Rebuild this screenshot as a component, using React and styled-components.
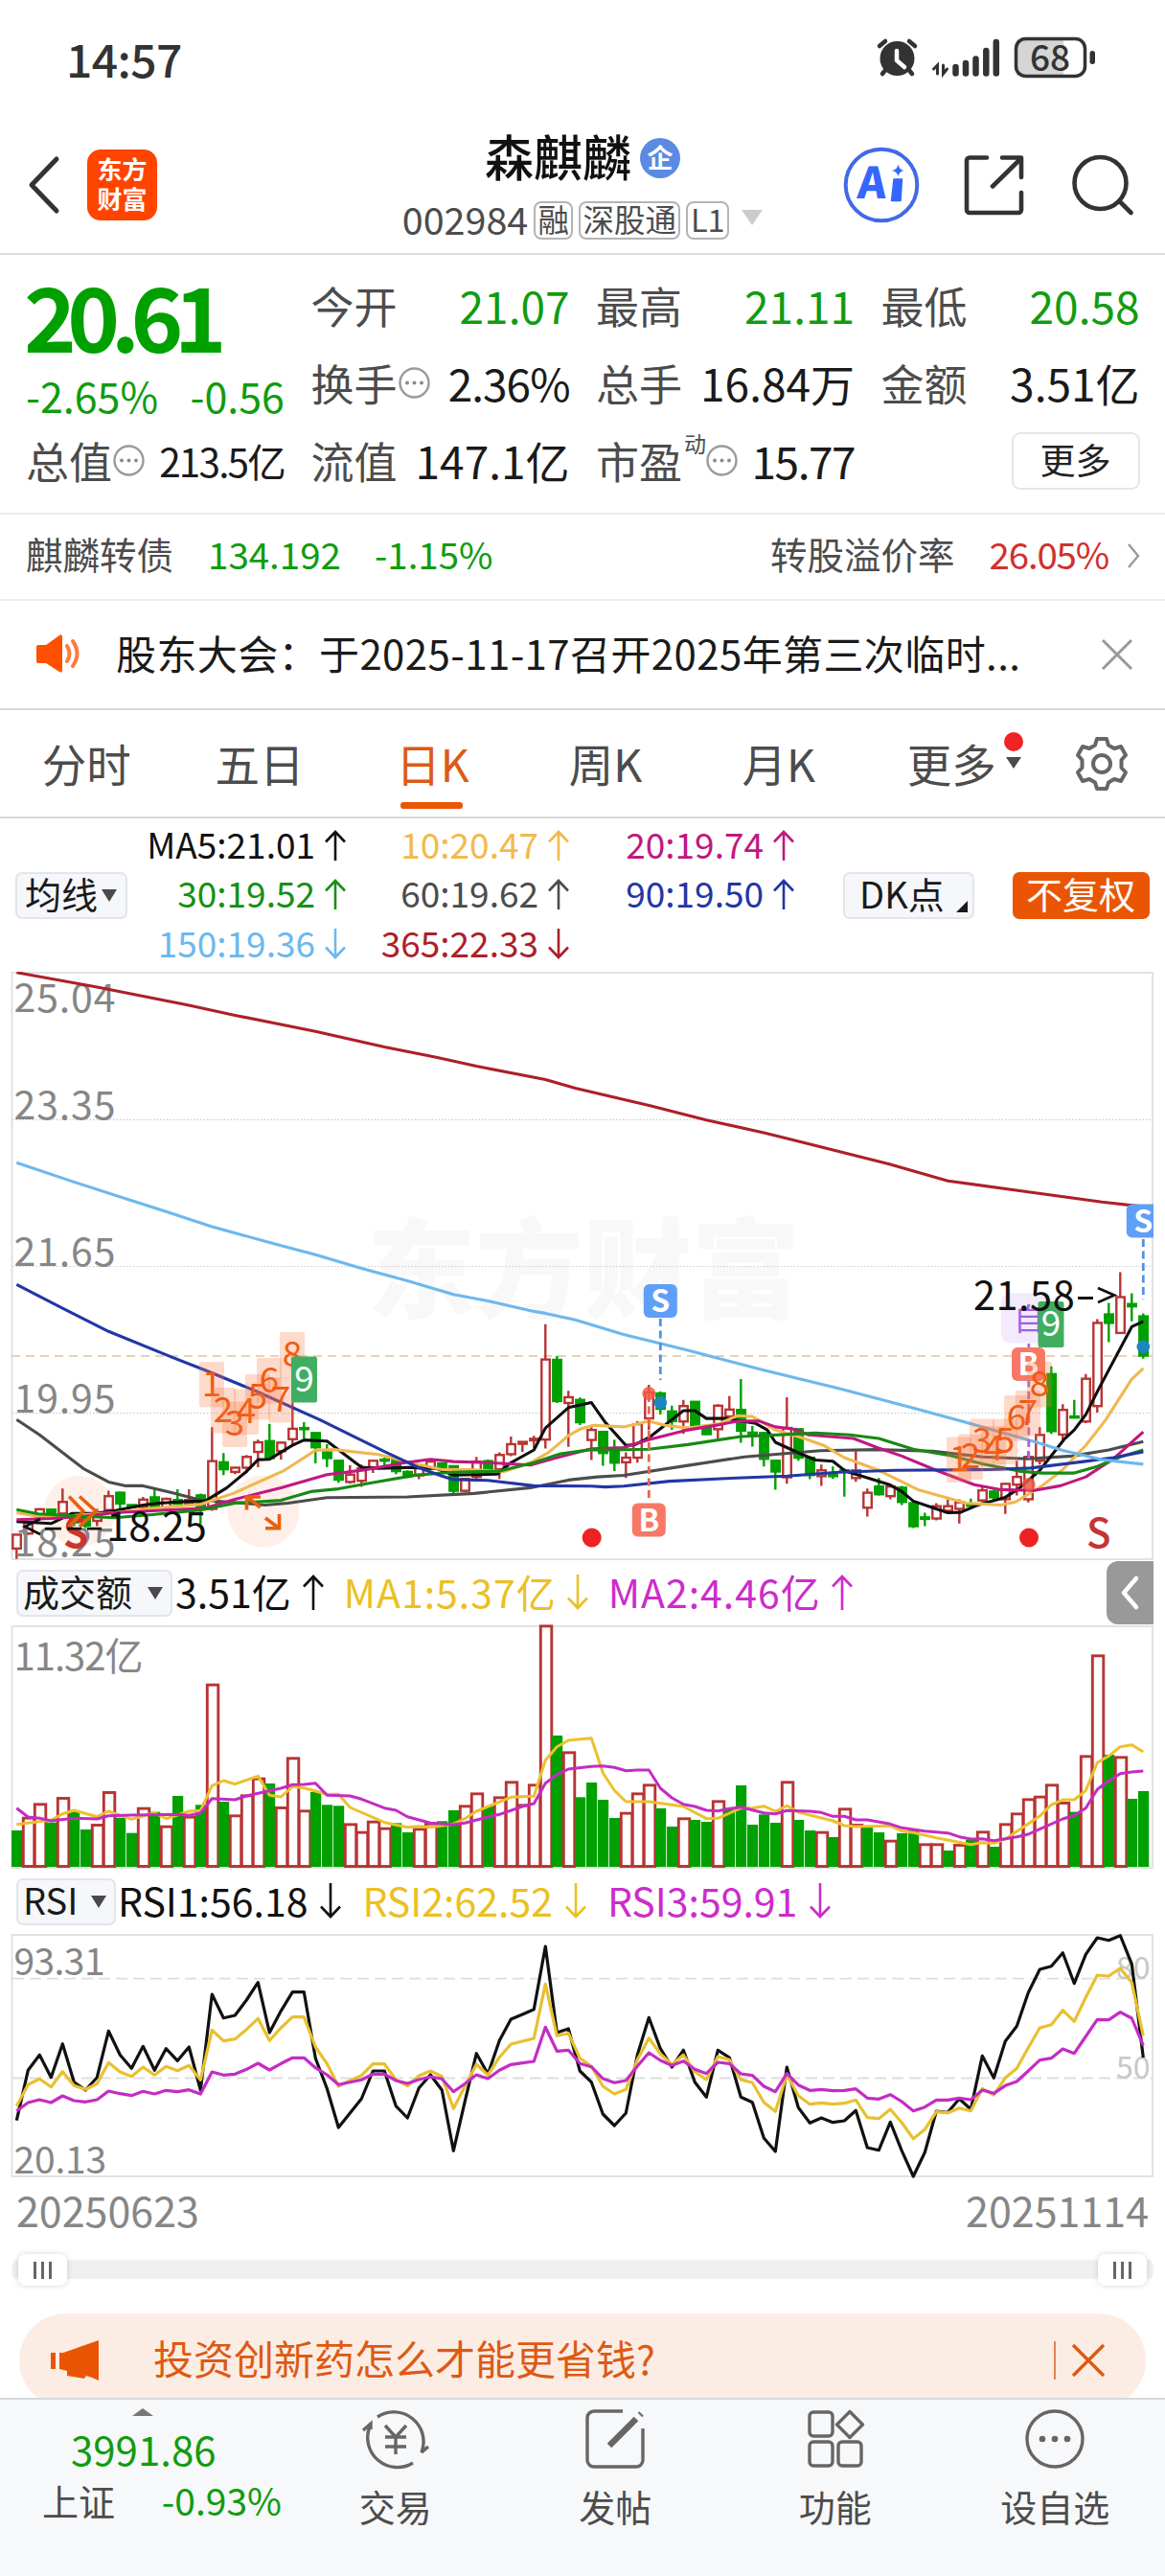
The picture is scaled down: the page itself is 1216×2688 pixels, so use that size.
import React from 'react'
import styled, { createGlobalStyle } from 'styled-components'

const GlobalStyle = createGlobalStyle`
  * {
    box-sizing: border-box;
  }
  body {
    margin: 0;
    background: #fff;
    font-family: "Noto Sans CJK SC", "Noto Sans", sans-serif;
    color: #1a1a1a;
  }
  svg {
    display: block;
    flex: none;
    overflow: visible;
  }
  svg text {
    font-family: "Noto Sans CJK SC", "Noto Sans", sans-serif;
  }
`

const GREEN = '#109c10'
const RED = '#d2302c'
const ORANGE = '#ea5504'

const Page = styled.div`
  width: 1216px;
  height: 2688px;
  display: flex;
  flex-direction: column;
  overflow: hidden;
  white-space: nowrap;
`

/* status bar */
const StatusBar = styled.div`
  height: 118px;
  flex: none;
  display: flex;
  align-items: center;
  justify-content: space-between;
  padding: 0 72px 0 69px;
`
const Clock = styled.div`
  font-size: 48px;
  font-weight: 500;
  line-height: 60px;
  letter-spacing: -0.6px;
  padding-top: 2px;
  color: #333;
`

/* header */
const Header = styled.header`
  height: 148px;
  flex: none;
  display: grid;
  grid-template-columns: 412px 392px 412px;
  border-bottom: 2px solid #dcdcdc;
`
const HeaderSide = styled.div`
  display: flex;
  align-items: center;
  justify-content: ${p => (p.$end ? 'flex-end' : 'flex-start')};
  padding: 3px 32px 0 30px;
`
const Logo = styled.div`
  width: 73px;
  height: 74px;
  margin-left: 29px;
  border-radius: 14px;
  background: #ff4400;
  color: #fff;
  font-size: 26px;
  font-weight: 700;
  line-height: 31px;
  padding-top: 4px;
  text-align: center;
`
const HeaderMid = styled.div`
  display: flex;
  flex-direction: column;
  align-items: center;
  padding-top: 11px;
`
const Title = styled.div`
  display: flex;
  align-items: center;
  font-size: 51px;
  font-weight: 500;
  line-height: 66px;
  color: #111;
`
const TitleBadge = styled.span`
  width: 42px;
  height: 42px;
  margin: 6px 0 0 9px;
  border-radius: 50%;
  background: #5b8ae2;
  color: #fff;
  font-size: 27px;
  font-weight: 700;
  line-height: 39px;
  text-align: center;
`
const CodeRow = styled.div`
  display: flex;
  align-items: center;
  gap: 6px;
  height: 64px;
  font-size: 39.5px;
  color: #4c4c4c;
`
const CodeTag = styled.span`
  width: ${p => p.$w}px;
  height: 40px;
  margin-top: 5px;
  border: 2px solid #b4b4b4;
  border-radius: 8px;
  font-size: 32.5px;
  line-height: 31px;
  text-align: center;
`
const Down = styled.i`
  width: 0;
  height: 0;
  border-left: ${p => p.$w / 2}px solid transparent;
  border-right: ${p => p.$w / 2}px solid transparent;
  border-top: ${p => p.$h}px solid ${p => p.$c || '#4a4a4a'};
`

/* quote */
const Quote = styled.section`
  height: 271px;
  flex: none;
  display: grid;
  grid-template-columns: repeat(4, 270px);
  grid-template-rows: repeat(3, 81px);
  column-gap: 27.5px;
  padding: 12px 26px 0 27px;
  border-bottom: 2px solid #ededed;
`
const PriceBlock = styled.div`
  grid-row: span 2;
`
const Price = styled.div`
  font-size: 93px;
  font-weight: 700;
  line-height: 99px;
  letter-spacing: -9.5px;
  margin-left: -2px;
  color: #00a000;
`
const Change = styled.div`
  display: flex;
  justify-content: space-between;
  font-size: 43px;
  line-height: 70px;
  color: ${GREEN};
`
const Cell = styled.div`
  display: flex;
  align-items: center;
  line-height: 81px;
  font-size: ${p => p.$size || 46}px;
  letter-spacing: ${p => p.$ls || 0}px;
`
const Label = styled.span`
  font-size: 45px;
  letter-spacing: 0;
  color: #4c4c4c;
`
const Sup = styled.sup`
  align-self: flex-start;
  font-size: 23px;
  line-height: 24px;
  margin: 10px 0 0 2px;
  color: #4c4c4c;
`
const Value = styled.span`
  margin-left: auto;
  color: ${p => p.$c || '#1a1a1a'};
`
const MoreButton = styled.button`
  width: 134px;
  height: 60px;
  margin-left: auto;
  padding: 0 0 4px;
  background: #fff;
  border: 2px solid #e6e6e6;
  border-radius: 9px;
  font: 37px "Noto Sans CJK SC", sans-serif;
  line-height: 52px;
  color: #222;
`

const BondRow = styled.div`
  height: 90px;
  flex: none;
  display: flex;
  align-items: center;
  padding: 0 26px 8px 27px;
  font-size: 38.5px;
  color: #4c4c4c;
  border-bottom: 2px solid #ededed;
`
const Num = styled.span`
  color: ${p => p.$c};
  margin-left: ${p => p.$ml}px;
  letter-spacing: ${p => p.$ls || 0}px;
`
const Push = styled.span`
  flex: 1;
`

const Notice = styled.div`
  height: 114px;
  flex: none;
  display: flex;
  align-items: center;
  padding: 0 33px 6px 36px;
  font-size: 42px;
  border-bottom: 2px solid #d8d8d8;
`
const NoticeText = styled.div`
  flex: 1;
  margin-left: 34px;
  letter-spacing: 0.4px;
`

/* period tabs */
const Tabs = styled.nav`
  height: 113px;
  flex: none;
  display: flex;
  border-bottom: 2px solid #d8d8d8;
`
const Tab = styled.div`
  width: 180.6px;
  display: flex;
  justify-content: center;
  position: relative;
  font-size: 46.5px;
  line-height: 109px;
  color: ${p => (p.$on ? '#dc5a14' : '#4c4c4c')};
  &::after {
    content: "";
    display: ${p => (p.$on ? 'block' : 'none')};
    position: absolute;
    left: 57px;
    bottom: 8px;
    width: 65px;
    height: 7px;
    border-radius: 3px;
    background: ${ORANGE};
  }
`
const TabMark = styled.div`
  display: flex;
  flex-direction: column;
  align-items: center;
  gap: 6px;
  padding-top: 23px;
  margin: 0 -28px 0 8px;
  &::before {
    content: "";
    width: 20px;
    height: 20px;
    border-radius: 50%;
    background: #f02424;
  }
`
const GearBox = styled.div`
  flex: 1;
  padding: 27px 0 0 37px;
`

/* indicator bars */
const MaBar = styled.div`
  height: 160px;
  flex: none;
  display: flex;
  align-items: center;
  padding-left: 16px;
`
const Pill = styled.div`
  width: ${p => p.$w}px;
  height: 49px;
  display: flex;
  align-items: center;
  justify-content: space-between;
  padding: ${p => p.$pad || '0 9px 0 8px'};
  font-size: 38px;
  line-height: 40px;
  color: ${p => (p.$solid ? '#fff' : '#1a1a1a')};
  background: ${p => (p.$solid ? ORANGE : '#f5f7fa')};
  border: 2px solid ${p => (p.$solid ? ORANGE : '#e2e5ea')};
  border-radius: 7px;
  margin-left: ${p => p.$ml || 0}px;
  span {
    margin-top: -5px;
  }
`
const Corner = styled.i`
  align-self: flex-end;
  margin-bottom: 5px;
  border-left: 12px solid transparent;
  border-bottom: 12px solid #1a1a1a;
`
const MaGrid = styled.div`
  display: grid;
  grid-template-columns: 228px 233px 235px;
  grid-auto-rows: 51.5px;
  align-self: flex-start;
`
const Legend = styled.div`
  display: flex;
  align-items: center;
  justify-content: flex-end;
  font-size: ${p => p.$size || 37}px;
  line-height: 50px;
  letter-spacing: ${p => p.$ls || 0}px;
  color: ${p => p.$c};
  margin-left: ${p => p.$ml || 0}px;
  svg {
    margin: 4px 0 0 ${p => p.$gap || 10}px;
  }
`
const SubBar = styled.div`
  height: 68px;
  flex: none;
  display: flex;
  align-items: center;
  padding: 0 12px 0 17px;
  ${Legend} {
    margin-top: -5px;
  }
`
const Collapse = styled.div`
  width: 49px;
  height: 66px;
  margin-left: auto;
  display: flex;
  align-items: center;
  justify-content: center;
  border-radius: 12px 0 0 12px;
  background: #999;
`

const AxisText = styled.text`
  font-size: ${p => p.$size || 41}px;
  letter-spacing: ${p => p.$ls || 0}px;
  fill: ${p => p.$c || '#868686'};
`

/* range */
const Dates = styled.div`
  height: 80px;
  flex: none;
  display: flex;
  justify-content: space-between;
  padding: 0 17px 0 17px;
  font-size: 43px;
  line-height: 66px;
  color: #868686;
`
const Range = styled.div`
  height: 33px;
  flex: none;
  margin: 0 12px;
  padding: 0 7px;
  display: flex;
  justify-content: space-between;
  background: linear-gradient(#f0f0f2, #f0f0f2) 0 6px / 100% 20px no-repeat;
  border-radius: 16px;
`
const Handle = styled.div`
  width: 51px;
  height: 33px;
  display: flex;
  align-items: center;
  justify-content: center;
  gap: 5.5px;
  border-radius: 8px;
  background: #fff;
  box-shadow: 0 0 6px rgba(0, 0, 0, 0.16);
  i {
    width: 2.5px;
    height: 18px;
    background: #666;
  }
`

/* banner */
const BannerWrap = styled.div`
  height: 117px;
  flex: none;
  overflow: hidden;
  padding: 29px 20px 0;
`
const Banner = styled.div`
  height: 98px;
  display: flex;
  align-items: center;
  padding: 0 41px 0 32px;
  border-radius: 49px;
  background: #fcede4;
  color: #dc5a14;
  font-size: 42px;
`
const BannerText = styled.div`
  flex: 1;
  margin: -8px 0 0 56px;
`

/* bottom navigation */
const BottomNav = styled.footer`
  flex: 1;
  display: flex;
  background: #f7f8fa;
  border-top: 2px solid #d6d7da;
`
const IndexBox = styled.div`
  width: 298px;
  display: flex;
  flex-direction: column;
  align-items: center;
  padding-top: 9px;
  font-size: 42px;
  color: ${GREEN};
`
const Up = styled.i`
  border-left: 11px solid transparent;
  border-right: 11px solid transparent;
  border-bottom: 8px solid #777;
`
const IndexLine = styled.div`
  width: 100%;
  height: ${p => p.$h}px;
  display: flex;
  justify-content: space-between;
  align-items: center;
  padding: ${p => p.$pad};
  font-size: ${p => p.$size}px;
  span {
    font-size: 38px;
    color: #4c4c4c;
  }
`
const NavItem = styled.div`
  width: 229.5px;
  display: flex;
  flex-direction: column;
  align-items: center;
  padding-top: 6px;
  font-size: 38px;
  line-height: 70px;
  color: #4c4c4c;
`

const Arrow = ({ down, h = 32 }) => (
  <svg width="22" height={h} viewBox={`0 0 22 ${h}`} fill="none" stroke="currentColor" strokeWidth="2.6">
    <g transform={down ? `rotate(180 11 ${h / 2})` : undefined}>
      <path d={`M11 ${h}V2M1 12.500L11 2L21 12.500`} />
    </g>
  </svg>
)

const More = () => (
  <svg width="33" height="33" viewBox="0 0 33 33">
    <circle cx="17.500" cy="16.500" r="15" fill="none" stroke="#9a9a9a" strokeWidth="2.4" />
    <g fill="#8a8a8a">
      <circle cx="10" cy="16.500" r="2" />
      <circle cx="17.500" cy="16.500" r="2" />
      <circle cx="25" cy="16.500" r="2" />
    </g>
  </svg>
)

const StatusIcons = () => (
  <svg width="230" height="44" viewBox="914 38 230 44">
    <g stroke="#333" strokeLinecap="round" fill="none">
      <circle cx="936.500" cy="62" r="18" fill="#333" stroke="none" />
      <path d="M918 49l6-5M955 49l-6-5M926 72l-5 6M947 72l5 6" strokeWidth="4.500" />
      <path d="M936 54v10l8 7" stroke="#fff" strokeWidth="4.500" strokeLinejoin="round" />
      <path d="M978.500 78V69l-4 4M984.500 69v9l4-5" strokeWidth="3" />
      <path d="M997.500 71v6.500M1008 67v10.500M1018.500 62.500v15M1029.300 54v23.500M1039.800 45v32.500" strokeWidth="6.500" />
    </g>
    <rect x="1061" y="42" width="49" height="38" fill="#d5d5d5" />
    <rect x="1060.500" y="41.500" width="72" height="39" rx="10" fill="none" stroke="#333" strokeWidth="3.500" />
    <rect x="1137.500" y="54" width="5.500" height="14" rx="2.700" fill="#333" />
    <text x="1096" y="75" fontSize="37" fontWeight="500" fill="#333" textAnchor="middle">68</text>
  </svg>
)

/* candles: [up, high, body top, body bottom, low], measured down from the top of the scale */
const CANDLES = [
  [1, 1472, 1472, 1508, 1535], [1, 1438, 1440, 1469, 1472], [1, 1403, 1406, 1425, 1430], [0, 1404, 1407, 1425, 1428], [1, 1352, 1387, 1417, 1417],
  [0, 1415, 1425, 1440, 1450], [0, 1420, 1430, 1448, 1455], [1, 1405, 1418, 1436, 1450], [1, 1358, 1372, 1408, 1412], [0, 1360, 1363, 1391, 1405],
  [0, 1393, 1395, 1400, 1402], [1, 1374, 1381, 1400, 1404], [0, 1354, 1375, 1399, 1405], [1, 1376, 1379, 1402, 1408], [0, 1354, 1382, 1392, 1395],
  [1, 1354, 1382, 1392, 1396], [0, 1365, 1370, 1400, 1445], [1, 1193, 1281, 1405, 1410], [0, 1260, 1284, 1302, 1317], [1, 1296, 1298, 1309, 1315],
  [1, 1265, 1270, 1298, 1312], [1, 1225, 1232, 1257, 1297], [0, 1184, 1229, 1273, 1275], [1, 1230, 1233, 1255, 1277], [1, 1128, 1197, 1224, 1240],
  [0, 1180, 1195, 1198, 1222], [0, 1207, 1208, 1245, 1287], [0, 1237, 1258, 1273, 1297], [0, 1279, 1280, 1329, 1337], [1, 1292, 1316, 1335, 1340],
  [1, 1290, 1300, 1332, 1348], [1, 1279, 1280, 1297, 1312], [0, 1272, 1277, 1280, 1295], [0, 1278, 1278, 1307, 1315], [0, 1305, 1309, 1320, 1325],
  [1, 1295, 1300, 1318, 1328], [1, 1275, 1282, 1300, 1304], [0, 1285, 1287, 1300, 1304], [0, 1292, 1294, 1358, 1364], [1, 1325, 1327, 1358, 1362],
  [1, 1270, 1282, 1322, 1330], [0, 1277, 1281, 1302, 1306], [1, 1258, 1265, 1302, 1327], [1, 1217, 1237, 1263, 1268], [1, 1230, 1231, 1236, 1257],
  [1, 1215, 1223, 1227, 1247], [1, 925, 1017, 1225, 1248], [0, 1008, 1018, 1125, 1130], [1, 1098, 1115, 1130, 1244], [0, 1116, 1122, 1180, 1187],
  [1, 1188, 1200, 1226, 1278], [0, 1203, 1205, 1260, 1293], [0, 1225, 1255, 1285, 1307], [1, 1258, 1272, 1284, 1325], [1, 1177, 1185, 1272, 1285],
  [1, 1083, 1103, 1170, 1200], [0, 1100, 1105, 1145, 1160], [0, 1137, 1152, 1177, 1200], [1, 1122, 1138, 1178, 1210], [0, 1127, 1127, 1187, 1190],
  [0, 1185, 1190, 1211, 1213], [1, 1133, 1137, 1198, 1222], [1, 1112, 1147, 1165, 1170], [0, 1068, 1148, 1202, 1233], [0, 1190, 1207, 1212, 1243],
  [0, 1205, 1208, 1275, 1295], [0, 1278, 1280, 1308, 1355], [1, 1115, 1195, 1323, 1340], [0, 1197, 1198, 1272, 1280], [0, 1270, 1272, 1317, 1328],
  [1, 1290, 1305, 1320, 1345], [0, 1295, 1316, 1320, 1327], [0, 1300, 1305, 1308, 1373], [1, 1255, 1305, 1325, 1335], [1, 1352, 1363, 1402, 1425],
  [0, 1325, 1347, 1367, 1370], [1, 1345, 1347, 1372, 1380], [0, 1345, 1350, 1387, 1395], [0, 1388, 1390, 1450, 1455], [0, 1415, 1427, 1431, 1450],
  [1, 1390, 1398, 1430, 1435], [1, 1380, 1398, 1410, 1412], [1, 1380, 1388, 1405, 1443], [0, 1378, 1393, 1397, 1405], [1, 1347, 1357, 1383, 1388],
  [0, 1355, 1360, 1375, 1385], [1, 1337, 1340, 1380, 1418], [1, 1280, 1322, 1342, 1370], [1, 1255, 1270, 1380, 1388], [1, 1193, 1213, 1280, 1290],
  [0, 1035, 1055, 1203, 1210], [1, 1133, 1148, 1212, 1230], [0, 1122, 1165, 1168, 1170], [1, 1055, 1067, 1178, 1182], [1, 912, 922, 1138, 1155],
  [0, 870, 900, 922, 972], [1, 790, 855, 948, 950], [0, 845, 873, 879, 918], [0, 897, 905, 1007, 1015],
]

/* moving averages: flat [day, level, day, level, ...] */
const AVERAGES = [
  ['#ad1f2a', [0, 12, 7, 50, 15, 97, 19, 123, 26, 165, 32, 205, 36.5, 232, 40, 255, 46, 290, 48.6, 312, 55.1, 358, 60, 395, 65, 428, 68.2, 452, 76, 510, 81, 553, 88, 582, 94.4, 608, 98, 620]],
  ['#4c4c4c', [0, 1173, 2, 1213, 5.8, 1300, 8, 1335, 9.5, 1345, 11, 1345, 13.4, 1362, 16, 1382, 19, 1388, 21.6, 1395, 23.6, 1390, 27, 1376, 34, 1374, 39.8, 1365, 44.7, 1350, 48, 1330, 50.5, 1322, 52.8, 1318, 58.4, 1292, 63.3, 1270, 69.9, 1254, 74.8, 1251, 79.7, 1255, 84, 1270, 87.9, 1275, 91.8, 1268, 95, 1252, 98, 1230]],
  ['#0f0f0f', [0, 1438, 3, 1443, 4.8, 1417, 6.8, 1417, 8.5, 1410, 11, 1395, 12.4, 1390, 14.7, 1386, 16.4, 1385, 18.3, 1350, 20, 1308, 21, 1277, 22, 1276, 24, 1240, 25, 1226, 27, 1229, 30, 1297, 31.5, 1300, 34.5, 1297, 36.5, 1300, 38, 1317, 41.8, 1315, 43, 1285, 45, 1252, 46, 1195, 48, 1142, 50, 1129, 51.2, 1180, 53, 1240, 53.8, 1238, 55, 1220, 58, 1150, 59, 1150, 60, 1170, 61.7, 1170, 62.7, 1175, 64.3, 1183, 65.3, 1200, 66, 1232, 68.2, 1262, 69.5, 1278, 71, 1281, 72.1, 1307, 76, 1343, 77, 1360, 78, 1385, 80, 1405, 81, 1415, 82.1, 1414, 83.6, 1395, 86, 1375, 87.2, 1352, 89, 1305, 91.1, 1225, 92, 1200, 93, 1160, 94.1, 1095, 97, 932, 98, 918]],
  ['#f0b84e', [0, 1415, 2, 1425, 5, 1422, 8.5, 1415, 12, 1403, 16, 1393, 19, 1363, 21.6, 1328, 23.3, 1305, 26, 1253, 27.6, 1251, 31.5, 1264, 34, 1283, 37, 1303, 39.4, 1303, 42.4, 1308, 44.7, 1285, 46.3, 1258, 48, 1215, 49, 1198, 50.2, 1188, 52.8, 1192, 55, 1177, 56.4, 1188, 58.4, 1195, 61, 1185, 62.7, 1163, 64, 1165, 66, 1200, 68.5, 1222, 70.2, 1240, 72, 1272, 75, 1305, 78.4, 1355, 82.6, 1390, 85.6, 1395, 86.9, 1387, 89.2, 1345, 91, 1303, 93, 1240, 94.7, 1175, 97, 1068, 98, 1040]],
  ['#c01880', [0, 1433, 3, 1430, 6, 1424, 8.5, 1415, 11.8, 1410, 16.4, 1403, 19, 1380, 23, 1350, 27, 1316, 30.2, 1304, 33.5, 1286, 36, 1276, 38, 1282, 41, 1285, 44.7, 1291, 47, 1272, 50, 1249, 52.8, 1246, 55, 1225, 58.4, 1200, 61, 1187, 62.7, 1177, 64.6, 1177, 66, 1192, 67.6, 1198, 68.9, 1213, 72.8, 1222, 74.8, 1245, 77, 1268, 80, 1305, 83.3, 1342, 85.6, 1355, 88.5, 1357, 90.8, 1345, 93, 1322, 95.4, 1275, 96.7, 1240, 98, 1205]],
  ['#158a15', [0, 1407, 1.9, 1418, 5, 1423, 8.5, 1428, 11.8, 1420, 16, 1408, 19, 1390, 23, 1383, 25.6, 1360, 28, 1353, 30.9, 1337, 34.8, 1317, 38, 1310, 42, 1307, 45, 1285, 47.3, 1262, 50, 1251, 51.8, 1252, 55, 1250, 58.4, 1238, 63, 1217, 66.9, 1212, 69.5, 1208, 72.5, 1213, 75, 1222, 78, 1250, 81.3, 1267, 84, 1288, 87.2, 1307, 89.2, 1312, 92, 1312, 94, 1295, 96, 1270, 98, 1252]],
  ['#2236a4', [0, 822, 4, 884, 8, 944, 13.6, 1012, 16.4, 1045, 20.8, 1099, 26.4, 1174, 31.9, 1255, 35, 1298, 37, 1320, 38, 1329, 41, 1331, 45, 1345, 50, 1346, 51.2, 1348, 52.8, 1346, 56.8, 1333, 61.7, 1326, 67, 1320, 71.5, 1310, 76.4, 1305, 84.6, 1303, 88.2, 1299, 92.8, 1282, 95.4, 1272, 98, 1257]],
  ['#6cb8ee', [0, 506, 5, 556, 10, 604, 13, 633, 17, 672, 22, 713, 26, 745, 30, 780, 34, 813, 38, 848, 41, 865, 45, 892, 46, 897, 48.6, 914, 52.8, 952, 58.4, 993, 65, 1045, 71.5, 1092, 78, 1143, 84.6, 1197, 88.5, 1230, 91, 1253, 94.4, 1277, 98, 1289]],
]

/* turnover bars: positive = up day, negative = down day */
const VOLUME = [
  -870, 830, 787, -845, 768, -812, -867, 852, 750, -830, -878, 800, -812, 857, -762, 827, -790, 413, -780, 823,
  760, 707, -723, 798, 643, 808, -750, -790, -793, 850, 875, 842, 863, -847, -876, 865, 848, -841, -807, 793,
  754, -795, 766, 718, 790, 727, 229, -573, 625, -766, -720, -774, -831, 815, 754, 727, -801, -858, 832, -837,
  -843, 778, -800, -729, -852, -820, -846, 718, -837, -870, 875, -891, 802, 852, -858, -876, 902, -879, -867, 913,
  913, -933, 915, -900, 874, -921, 850, 817, 772, 764, 727, 783, -812, 637, 322, -633, 640, -771, -747,
]
const VOLUME_LINES = [
  ['#ebc22c', [0, 851, 3, 838, 4, 818, 5, 807, 7, 827, 8, 810, 10, 835, 12, 815, 13, 833, 15, 810, 16, 808, 17, 730, 18, 714, 19, 725, 21, 700, 22, 760, 23, 765, 24, 733, 25, 737, 27, 757, 28, 757, 29, 798, 32, 845, 34, 860, 35, 857, 36, 860, 38, 850, 39, 833, 40, 810, 43, 766, 45, 763, 46, 650, 47, 608, 48, 588, 50, 581, 51, 690, 52, 745, 53, 780, 55, 780, 58, 795, 60, 833, 61, 832, 63, 800, 64, 800, 65, 794, 66, 810, 67, 793, 68, 813, 71, 840, 72, 855, 73, 858, 76, 856, 77, 872, 78, 877, 80, 893, 83, 914, 84, 908, 85, 910, 86, 897, 89, 825, 90, 790, 91, 774, 92, 774, 93, 745, 94, 658, 95, 637, 96, 608, 97, 602, 98, 624]],
  ['#c42cc4', [0, 800, 1, 828, 2, 832, 3, 840, 5, 832, 7, 834, 8, 824, 10, 822, 14, 820, 15, 823, 16, 816, 17, 770, 19, 774, 20, 762, 23, 738, 24, 727, 25, 726, 26, 722, 27, 760, 29, 762, 30, 772, 32, 800, 33, 807, 34, 827, 36, 847, 38, 852, 39, 847, 41, 828, 42, 820, 44, 795, 45, 786, 46, 722, 47, 695, 48, 678, 50, 670, 51, 668, 52, 673, 53, 683, 54, 681, 55, 681, 56, 738, 57, 768, 58, 788, 59, 795, 60, 807, 61, 809, 62, 802, 63, 797, 65, 815, 66, 818, 67, 808, 69, 810, 70, 814, 71, 826, 72, 826, 73, 837, 74, 837, 76, 850, 77, 862, 79, 872, 81, 878, 82, 890, 83, 897, 84, 896, 85, 902, 87, 890, 88, 882, 89, 866, 91, 834, 92, 823, 93, 800, 94, 742, 95, 715, 96, 692, 97, 687, 98, 684]],
]

/* RSI, one level per day */
const RSI = [
  ['#111', [635, 478, 430, 500, 395, 515, 540, 500, 355, 430, 472, 403, 478, 410, 448, 405, 540, 240, 314, 306, 258, 203, 360, 292, 233, 233, 440, 535, 657, 612, 567, 480, 480, 590, 627, 533, 492, 540, 730, 575, 425, 490, 385, 318, 303, 287, 90, 360, 348, 480, 515, 615, 651, 612, 430, 313, 410, 468, 415, 515, 562, 415, 438, 562, 578, 690, 732, 468, 595, 643, 627, 641, 636, 604, 720, 728, 640, 730, 810, 735, 606, 610, 567, 600, 433, 502, 387, 340, 235, 162, 152, 110, 206, 115, 63, 71, 56, 145, 438]],
  ['#e8c030', [590, 523, 505, 530, 482, 526, 538, 520, 454, 483, 497, 468, 493, 466, 479, 463, 508, 352, 386, 380, 350, 316, 385, 345, 311, 311, 405, 457, 528, 510, 494, 458, 458, 508, 527, 495, 480, 497, 598, 528, 459, 493, 437, 396, 387, 378, 208, 370, 362, 440, 465, 528, 552, 538, 445, 377, 427, 460, 430, 483, 507, 435, 445, 507, 517, 578, 607, 492, 557, 584, 580, 584, 581, 571, 626, 629, 600, 642, 692, 663, 608, 611, 596, 605, 535, 555, 502, 472, 407, 345, 335, 290, 325, 250, 180, 183, 158, 203, 370]],
  ['#c42cc4', [605, 579, 570, 579, 558, 573, 577, 570, 543, 551, 557, 544, 552, 541, 545, 539, 552, 483, 493, 490, 475, 456, 477, 457, 439, 439, 470, 492, 523, 515, 508, 490, 490, 510, 519, 507, 498, 505, 545, 520, 492, 504, 478, 460, 455, 450, 343, 418, 415, 457, 467, 504, 517, 510, 465, 423, 447, 463, 449, 475, 488, 453, 457, 489, 494, 528, 545, 488, 524, 541, 538, 542, 541, 536, 565, 568, 554, 576, 605, 593, 571, 571, 565, 570, 540, 550, 526, 513, 480, 446, 440, 411, 425, 372, 319, 320, 296, 315, 400]],
]

const x = i => 17.3 + i * 12
const priceY = v => 1010 + v / 2.489
const volY = v => 1620 + v / 3
const rsiY = v => 2000 + v / 3

const line = (flat, y) => {
  const out = []
  for (let i = 0; i < flat.length; i += 2) out.push(`${x(flat[i]).toFixed(1)},${y(flat[i + 1]).toFixed(1)}`)
  return out.join(' ')
}

const Line = ({ c, pts, w = 3.4 }) => (
  <polyline points={pts} fill="none" stroke={c} strokeWidth={w} strokeLinejoin="round" />
)

const Count = ({ n, cx, top }) => (
  <g>
    <rect x={cx - 13} y={top} width="26" height="47.500" rx="2" fill="#f97a45" fillOpacity="0.28" />
    <text x={cx} y={top + 35.5} fontSize="37" fill="#f05a10" textAnchor="middle">{n}</text>
  </g>
)
const Nine = ({ left, top }) => (
  <g>
    <rect x={left} y={top} width="27" height="48" rx="2.500" fill="#3fae60" />
    <text x={left + 13.5} y={top + 36} fontSize="37" fill="#fff" textAnchor="middle">9</text>
  </g>
)
const Flag = ({ t, left, top, c }) => (
  <g>
    <rect x={left} y={top} width="35" height="35" rx="6" fill={c} />
    <text x={left + 17.5} y={top + 29} fontSize="32" fontWeight="700" fill="#fff" textAnchor="middle">{t}</text>
  </g>
)

const KChart = () => (
  <svg width="1216" height="614" viewBox="0 1014 1216 614">
    <defs>
      <clipPath id="plot"><rect x="12" y="1014" width="1192" height="614" /></clipPath>
    </defs>
    <text x="383" y="1366" fontSize="113" fontWeight="900" fill="#f8f8f8">东方财富</text>
    <rect x="12.500" y="1015" width="1190.500" height="612" fill="none" stroke="#e2e2e2" strokeWidth="2" />
    <g stroke="#ccc" strokeWidth="1.200" strokeDasharray="1.500 2">
      <path d="M13 1168.300H1203M13 1321.500H1203M13 1474.700H1203" />
    </g>
    <path d="M12 1415H1203" stroke="#dfc49c" strokeWidth="1.600" strokeDasharray="9 6" />
    <AxisText x="14.500" y="1055.500" $ls={0.9}>25.04</AxisText>
    <AxisText x="14.500" y="1167.500" $ls={0.9}>23.35</AxisText>
    <AxisText x="14.500" y="1320.500" $ls={0.9}>21.65</AxisText>
    <AxisText x="14.500" y="1474" $ls={0.9}>19.95</AxisText>
    <g clipPath="url(#plot)">
      <circle cx="83" cy="1577" r="37" fill="#fde6da" fillOpacity="0.6" />
      <circle cx="274.700" cy="1577" r="37.500" fill="#fde6da" fillOpacity="0.6" />
      {CANDLES.map(([up, hi, top, bot, lo], i) => {
        const c = up ? '#b83434' : '#00a000'
        const t = priceY(top)
        const b = priceY(bot)
        return (
          <g key={i} stroke={c} strokeWidth="2.400">
            <path d={`M${x(i)} ${priceY(hi)}V${t}M${x(i)} ${b}V${priceY(lo)}`} />
            <rect x={x(i) - 4} y={t} width="8.500" height={Math.max(b - t, 0.6)} fill={up ? '#fff' : c} />
          </g>
        )
      })}
      {AVERAGES.map(([c, pts]) => <Line key={c} c={c} pts={line(pts, priceY)} w={3.1} />)}

      <AxisText x="14.500" y="1623.500" $ls={0.9}>18.25</AxisText>
      <text x="66" y="1615" fontSize="42" fontWeight="700" fill="#c8362e">S</text>
      <g fill="none" stroke="#e8600f" strokeWidth="3.600">
        <path d="M72 1561.500L87 1577L72 1593M83 1561.500L100 1577L83 1593" />
        <path d="M271.700 1573L258 1562M257.500 1575.500V1562H272M277 1584L291 1594.500M277 1594.800H291.500V1580" />
      </g>
      <path d="M42 1585L26 1593L42 1601M47 1595.200h17M70 1595.200h15M91 1595.200h15" stroke="#111" strokeWidth="2.800" fill="none" />
      <AxisText x="111" y="1607.700" $size={42} $c="#111">18.25</AxisText>

      <Count n="1" cx={221} top={1421} />
      <Count n="2" cx={233} top={1448} />
      <Count n="3" cx={245} top={1462.5} />
      <Count n="4" cx={257} top={1449.5} />
      <Count n="5" cx={269} top={1434} />
      <Count n="6" cx={281} top={1417} />
      <Count n="7" cx={293} top={1437} />
      <Count n="8" cx={305} top={1390} />
      <Nine left={304} top={1415.500} />

      <g fill="none" strokeWidth="2.800" strokeDasharray="8 4.500">
        <path d="M689.300 1376V1440M1193.300 1293V1356" stroke="#5590e0" />
        <path d="M677.300 1455V1567" stroke="#e8644c" />
        <path d="M1073.800 1402V1522" stroke="#b060e8" />
      </g>
      <circle cx="677.300" cy="1454" r="7" fill="#f05a44" fillOpacity="0.85" />
      <circle cx="1073.800" cy="1549" r="7" fill="#f05a44" fillOpacity="0.85" />
      <circle cx="689.300" cy="1463.500" r="6.800" fill="#1c86c2" />
      <circle cx="1193.300" cy="1405.300" r="6.800" fill="#1c86c2" />
      <rect x="1045" y="1349.500" width="52" height="52" rx="9" fill="#f3eafd" />
      <text x="1058" y="1387.500" fontSize="32" fill="#a060e0">自</text>
      <Nine left={1083.500} top={1358} />
      <Flag t="B" left={1056} top={1406} c="#f87866" />
      <Count n="1" cx={1001} top={1499.5} />
      <Count n="2" cx={1013} top={1496.5} />
      <Count n="3" cx={1025} top={1480.5} />
      <Count n="4" cx={1037} top={1488} />
      <Count n="5" cx={1049} top={1480.5} />
      <Count n="6" cx={1061} top={1456} />
      <Count n="7" cx={1073} top={1451} />
      <Count n="8" cx={1085} top={1421} />
      <Flag t="S" left={671.800} top={1340} c="#5f9ff8" />
      <Flag t="B" left={659.800} top={1568.500} c="#f87866" />
      <Flag t="S" left={1175.800} top={1256.500} c="#5f9ff8" />
      <AxisText x="1016" y="1366.800" $size={41.5} $ls={0.5} $c="#111">21.58</AxisText>
      <path d="M1125 1354.500h16M1146 1344L1163 1351.500L1146 1359" stroke="#111" strokeWidth="2.800" fill="none" />
      <circle cx="617.700" cy="1604.500" r="10" fill="#ee2222" />
      <circle cx="1074" cy="1604.500" r="10" fill="#ee2222" />
      <text x="1134" y="1615" fontSize="42" fontWeight="500" fill="#c43434">S</text>
    </g>
  </svg>
)

const VolumeChart = () => (
  <svg width="1216" height="254" viewBox="0 1696 1216 254">
    <rect x="12.500" y="1697" width="1190.500" height="252" fill="none" stroke="#e2e2e2" strokeWidth="2" />
    <AxisText x="14.500" y="1743" $size={40} $ls={-1}>11.32亿</AxisText>
    {VOLUME.map((v, i) => {
      const t = volY(Math.abs(v))
      return v < 0
        ? <rect key={i} x={x(i) - 5.3} y={t} width="11.200" height={1948 - t} fill="#00a000" />
        : <rect key={i} x={x(i) - 5} y={t + 0.5} width="11.500" height={1947 - t} fill="#fff" stroke="#b83434" strokeWidth="2.900" />
    })}
    {VOLUME_LINES.map(([c, pts]) => <Line key={c} c={c} pts={line(pts, volY)} w={3} />)}
  </svg>
)

const RsiChart = () => (
  <svg width="1216" height="254" viewBox="0 2017 1216 254">
    <rect x="12.500" y="2018" width="1190.500" height="252" fill="none" stroke="#e2e2e2" strokeWidth="2" />
    <path d="M13 2063.700H1203M13 2167.500H1203" stroke="#dedede" strokeWidth="1.800" strokeDasharray="12 6" />
    <AxisText x="14.500" y="2060" $size={39} $ls={-0.6}>93.31</AxisText>
    <AxisText x="14.500" y="2266.500" $size={39} $ls={-0.2}>20.13</AxisText>
    <AxisText x="1165" y="2063.500" $size={32} $c="#c8c8c8">80</AxisText>
    <AxisText x="1165" y="2168" $size={32} $c="#c8c8c8">50</AxisText>
    {RSI.map(([c, v]) => <Line key={c} c={c} pts={line(v.flatMap((n, i) => [i, n]), rsiY)} w={3.2} />)}
  </svg>
)

const MA_LEGENDS = [
  ['MA5:21.01', '#111'],
  ['10:20.47', '#f2b94c'],
  ['20:19.74', '#c01880'],
  ['30:19.52', '#159015'],
  ['60:19.62', '#4c4c4c'],
  ['90:19.50', '#2236a4'],
  ['150:19.36', '#6cb8ee', 1],
  ['365:22.33', '#ad1f2a', 1],
]

const NAV = [
  ['交易', <>
    <path d="M16 12A31 31 0 0 1 62 49L69 43M8 22A31 31 0 0 0 53 60M1 26L9 19V25" />
    <path d="M24 21L35 33L46 21M35 33V51M24 33H46M24 43H46" />
  </>],
  ['发帖', <>
    <path d="M43 6H13A7 7 0 0 0 6 13V57A7 7 0 0 0 13 64H57A7 7 0 0 0 64 57V24" />
    <path d="M29 42L57 14M61 10L62.500 8.500" strokeWidth="6.500" />
  </>],
  ['功能', <>
    <rect x="8" y="7" width="24" height="25" rx="4" />
    <rect x="8" y="38" width="24" height="25" rx="4" />
    <rect x="38" y="38" width="24" height="25" rx="4" />
    <path d="M50 6.500L63.500 20L50 33.500L36.500 20Z" strokeLinejoin="round" />
  </>],
  ['设自选', <>
    <circle cx="35" cy="35" r="29" />
    <g fill="#666" stroke="none">
      <circle cx="22" cy="35" r="3.300" />
      <circle cx="35" cy="35" r="3.300" />
      <circle cx="48" cy="35" r="3.300" />
    </g>
  </>],
]

function App() {
  return (
    <Page>
      <GlobalStyle />
      <StatusBar>
        <Clock>14:57</Clock>
        <StatusIcons />
      </StatusBar>

      <Header>
        <HeaderSide>
          <svg width="32" height="60" viewBox="0 0 32 60" fill="none" stroke="#333" strokeWidth="5" strokeLinecap="round" strokeLinejoin="round">
            <path d="M29 3L3 30L29 57" />
          </svg>
          <Logo>东方<br />财富</Logo>
        </HeaderSide>
        <HeaderMid>
          <Title>森麒麟<TitleBadge>企</TitleBadge></Title>
          <CodeRow>
            002984
            <CodeTag $w={41}>融</CodeTag>
            <CodeTag $w={106}>深股通</CodeTag>
            <CodeTag $w={45}>L1</CodeTag>
            <Down $w={23} $h={16} $c="#ccc" style={{ marginLeft: 7 }} />
          </CodeRow>
        </HeaderMid>
        <HeaderSide $end>
          <svg width="80" height="80" viewBox="0 0 80 80">
            <circle cx="40" cy="40" r="37.300" fill="none" stroke="#4169e8" strokeWidth="4" />
            <text x="14" y="54" fontSize="45" fontWeight="900" fill="#3566ff" transform="skewX(-4) translate(4 0)">A</text>
            <path d="M53 34H61.500L60 56.500H50.500Z" fill="#3566ff" stroke="#3566ff" strokeWidth="1.500" strokeLinejoin="round" />
            <path d="M57.500 18.500Q58.500 24 63.500 25Q58.500 26 57.500 31Q56.500 26 51 25Q56.500 24 57.500 18.500Z" fill="#3566ff" />
          </svg>
          <svg width="64" height="64" viewBox="0 0 64 64" fill="none" stroke="#333" strokeWidth="4.600" strokeLinecap="round" strokeLinejoin="round" style={{ marginLeft: 46 }}>
            <path d="M24 3.500H6A3 3 0 0 0 3 6.500V58A3 3 0 0 0 6 61H57A3 3 0 0 0 60 58V40M40 3.500H60V24M59 5L30 33.500" />
          </svg>
          <svg width="66" height="66" viewBox="0 0 66 66" fill="none" stroke="#333" strokeWidth="4.600" strokeLinecap="round" style={{ marginLeft: 48 }}>
            <circle cx="30.500" cy="31" r="27" />
            <path d="M50.500 50L62.500 62" />
          </svg>
        </HeaderSide>
      </Header>

      <Quote>
        <PriceBlock>
          <Price>20.61</Price>
          <Change><span>-2.65%</span><span>-0.56</span></Change>
        </PriceBlock>
        <Cell><Label>今开</Label><Value $c={GREEN}>21.07</Value></Cell>
        <Cell><Label>最高</Label><Value $c={GREEN}>21.11</Value></Cell>
        <Cell><Label>最低</Label><Value $c={GREEN}>20.58</Value></Cell>
        <Cell $ls={-1}><Label>换手</Label><More /><Value>2.36%</Value></Cell>
        <Cell><Label>总手</Label><Value>16.84万</Value></Cell>
        <Cell><Label>金额</Label><Value>3.51亿</Value></Cell>
        <Cell $size={40.5} $ls={-1.8}><Label>总值</Label><More /><Value>213.5亿</Value></Cell>
        <Cell><Label>流值</Label><Value>147.1亿</Value></Cell>
        <Cell $ls={-1.5}><Label>市盈</Label><Sup>动</Sup><More /><Value>15.77</Value></Cell>
        <Cell><MoreButton>更多</MoreButton></Cell>
      </Quote>

      <BondRow>
        麒麟转债
        <Num $c={GREEN} $ml={36}>134.192</Num>
        <Num $c={GREEN} $ml={35}>-1.15%</Num>
        <Push />
        转股溢价率
        <Num $c={RED} $ml={36} $ls={-1.2}>26.05%</Num>
        <svg width="14" height="28" viewBox="0 0 14 28" fill="none" stroke="#999" strokeWidth="2.400" style={{ margin: '5px 0 0 19px' }}>
          <path d="M2 2L12 14L2 26" />
        </svg>
      </BondRow>

      <Notice>
        <svg width="51" height="42" viewBox="0 0 51 42" style={{ marginTop: 4 }}>
          <path d="M4 12H12L26 2Q29 0 29 4V38Q29 42 26 40L12 31H4Q2 31 2 29V14Q2 12 4 12Z" fill="#ff5000" />
          <path d="M34 13Q39 21 34 29M40 8Q49 21 40 34" fill="none" stroke="#ff7a3c" strokeWidth="4" strokeLinecap="round" />
        </svg>
        <NoticeText>股东大会：于2025-11-17召开2025年第三次临时...</NoticeText>
        <svg width="34" height="34" viewBox="0 0 34 34" stroke="#999" strokeWidth="3" style={{ marginTop: 5 }}>
          <path d="M2 2L32 32M32 2L2 32" />
        </svg>
      </Notice>

      <Tabs>
        <Tab>分时</Tab>
        <Tab>五日</Tab>
        <Tab $on>日K</Tab>
        <Tab>周K</Tab>
        <Tab>月K</Tab>
        <Tab>更多<TabMark><Down $w={16} $h={12} /></TabMark></Tab>
        <GearBox>
          <svg width="58" height="58" viewBox="0 0 58 58" fill="none" stroke="#666" strokeWidth="4" strokeLinejoin="round">
            <path d="M24 3H34L36 9.500L42 13L49 11L54 20L49.500 25V33L54 38L49 47L42 45L36 48.500L34 55H24L22 48.500L16 45L9 47L4 38L8.500 33V25L4 20L9 11L16 13L22 9.500Z" />
            <circle cx="29" cy="29" r="9" />
          </svg>
        </GearBox>
      </Tabs>

      <MaBar>
        <Pill $w={117}><span>均线</span><Down $w={16} $h={13} /></Pill>
        <MaGrid>
          {MA_LEGENDS.map(([t, c, down]) => (
            <Legend key={t} $c={c}>{t}<Arrow down={down} /></Legend>
          ))}
        </MaGrid>
        <Pill $w={137} $ml={51} $pad="0 5px 0 15px"><span>DK点</span><Corner /></Pill>
        <Pill $w={143} $ml={40} $solid $pad="0 12px"><span>不复权</span></Pill>
      </MaBar>
      <KChart />

      <SubBar>
        <Pill $w={163} $pad="0 8px 0 5px"><span>成交额</span><Down $w={17} $h={13} /></Pill>
        <Legend $size={41} $ml={3} $gap={12} $c="#111">3.51亿<Arrow h={37} /></Legend>
        <Legend $size={41} $ml={21} $gap={11} $ls={1} $c="#ebc022">MA1:5.37亿<Arrow down h={37} /></Legend>
        <Legend $size={41} $ml={21} $gap={11} $ls={1} $c="#cc2ccc">MA2:4.46亿<Arrow h={37} /></Legend>
        <Collapse>
          <svg width="20" height="36" viewBox="0 0 20 36" fill="none" stroke="#fff" strokeWidth="4.500" strokeLinecap="round" strokeLinejoin="round">
            <path d="M16 3L3 18L16 33" />
          </svg>
        </Collapse>
      </SubBar>
      <VolumeChart />

      <SubBar>
        <Pill $w={104} $pad="0 8px 0 5px"><span>RSI</span><Down $w={17} $h={13} /></Pill>
        <Legend $size={41} $ml={2} $gap={13} $c="#111">RSI1:56.18<Arrow down h={37} /></Legend>
        <Legend $size={41} $ml={22} $gap={13} $c="#ebc022">RSI2:62.52<Arrow down h={37} /></Legend>
        <Legend $size={41} $ml={22} $gap={13} $c="#cc2ccc">RSI3:59.91<Arrow down h={37} /></Legend>
      </SubBar>
      <RsiChart />

      <Dates><span>20250623</span><span>20251114</span></Dates>
      <Range>
        <Handle><i /><i /><i /></Handle>
        <Handle><i /><i /><i /></Handle>
      </Range>

      <BannerWrap>
        <Banner>
          <svg width="52" height="42" viewBox="0 0 52 42" fill="#ea5504">
            <path d="M1 13H6V30H1ZM10 13H14L51 0V42L44 39L38 37L36 40L18 37V32L10 30Z" />
          </svg>
          <BannerText>投资创新药怎么才能更省钱?</BannerText>
          <svg width="56" height="40" viewBox="0 0 56 40" stroke="#dc5a14" fill="none">
            <path d="M2 0V40" strokeWidth="1.400" />
            <path d="M21 4L53 36M53 4L21 36" strokeWidth="3.400" />
          </svg>
        </Banner>
      </BannerWrap>

      <BottomNav>
        <IndexBox>
          <Up />
          <IndexLine $h={66} $size={42} $pad="0 72px 0 74px">3991.86</IndexLine>
          <IndexLine $h={42} $size={39} $pad="0 4px 0 44px"><span>上证</span>-0.93%</IndexLine>
        </IndexBox>
        {NAV.map(([t, icon]) => (
          <NavItem key={t}>
            <svg width="70" height="70" viewBox="0 0 70 70" fill="none" stroke="#666" strokeWidth="3.400">{icon}</svg>
            {t}
          </NavItem>
        ))}
      </BottomNav>
    </Page>
  )
}

export default App
